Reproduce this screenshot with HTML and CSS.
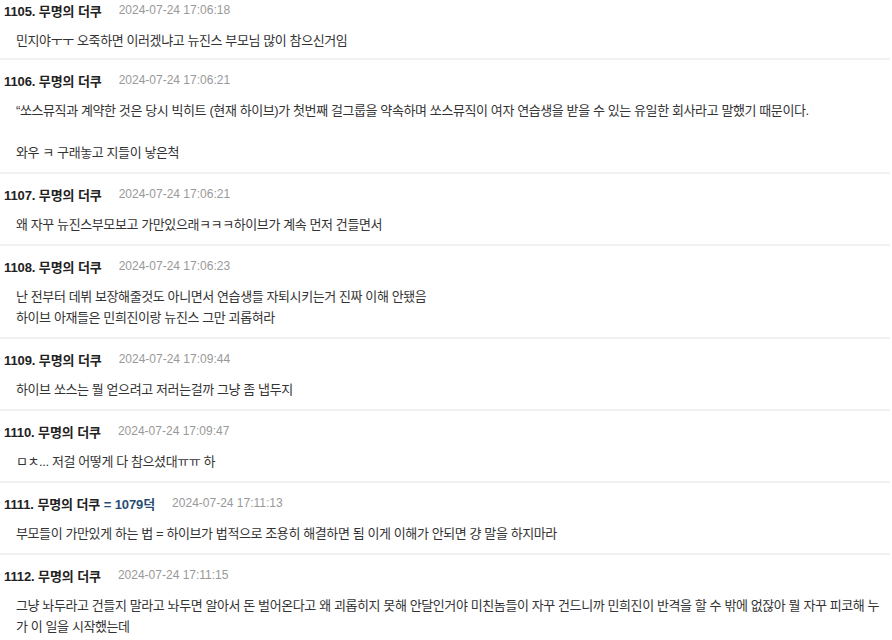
FILE: index.html
```html
<!DOCTYPE HTML>
<html>
<head>
<meta charset="utf-8">
<title>댓글</title>
<link rel="stylesheet" href="styles.css">
</head>
<body>

<!-- comment list, scrolled part way down -->
<ul class="comments">
	<li class="comment">
		<div class="head"><span class="nick">1105. 무명의 더쿠</span><span class="date">2024-07-24 17:06:18</span></div>
		<div class="body">민지야ㅜㅜ 오죽하면 이러겠냐고 뉴진스 부모님 많이 참으신거임</div>
	</li>
	<li class="comment">
		<div class="head"><span class="nick">1106. 무명의 더쿠</span><span class="date">2024-07-24 17:06:21</span></div>
		<div class="body">“쏘스뮤직과 계약한 것은 당시 빅히트 (현재 하이브)가 첫번째 걸그룹을 약속하며 쏘스뮤직이 여자 연습생을 받을 수 있는 유일한 회사라고 말했기 때문이다.<br><br>와우 ㅋ 구래놓고 지들이 낳은척</div>
	</li>
	<li class="comment">
		<div class="head"><span class="nick">1107. 무명의 더쿠</span><span class="date">2024-07-24 17:06:21</span></div>
		<div class="body">왜 자꾸 뉴진스부모보고 가만있으래ㅋㅋㅋ하이브가 계속 먼저 건들면서</div>
	</li>
	<li class="comment">
		<div class="head"><span class="nick">1108. 무명의 더쿠</span><span class="date">2024-07-24 17:06:23</span></div>
		<div class="body">난 전부터 데뷔 보장해줄것도 아니면서 연습생들 자퇴시키는거 진짜 이해 안됐음<br>하이브 아재들은 민희진이랑 뉴진스 그만 괴롭혀라</div>
	</li>
	<li class="comment">
		<div class="head"><span class="nick">1109. 무명의 더쿠</span><span class="date">2024-07-24 17:09:44</span></div>
		<div class="body">하이브 쏘스는 뭘 얻으려고 저러는걸까 그냥 좀 냅두지</div>
	</li>
	<li class="comment">
		<div class="head"><span class="nick">1110. 무명의 더쿠</span><span class="date">2024-07-24 17:09:47</span></div>
		<div class="body">ㅁㅊ... 저걸 어떻게 다 참으셨대ㅠㅠ 하</div>
	</li>
	<li class="comment">
		<div class="head"><span class="nick">1111. 무명의 더쿠 <span class="reply">= 1079덕</span></span><span class="date">2024-07-24 17:11:13</span></div>
		<div class="body">부모들이 가만있게 하는 법 = 하이브가 법적으로 조용히 해결하면 됨 이게 이해가 안되면 걍 말을 하지마라</div>
	</li>
	<li class="comment">
		<div class="head"><span class="nick">1112. 무명의 더쿠</span><span class="date">2024-07-24 17:11:15</span></div>
		<div class="body">그냥 놔두라고 건들지 말라고 놔두면 알아서 돈 벌어온다고 왜 괴롭히지 못해 안달인거야 미친놈들이 자꾸 건드니까 민희진이 반격을 할 수 밖에 없잖아 뭘 자꾸 피코해 누<br>가 이 일을 시작했는데</div>
	</li>
</ul>

</body>
</html>
```

FILE: styles.css
```css
body {
	margin: 0;
	padding: 0;
	background-color: #fff;
	color: #333;
	font-family: "Liberation Sans", "Noto Sans CJK KR", sans-serif;
	font-size: 13px;
}
.comments {
	list-style: none;
	margin: 0 2px 0 0;
	padding: 0;
}
.comment {
	padding: 10px 0 9px 0;
	border-bottom: 2px solid #f1f1f1;
}
.comment:first-child {
	padding-top: 0;
	padding-bottom: 7px;
}
.comment .head {
	display: flex;
	align-items: center;
	gap: 17px;
	height: 20px;
	padding-left: 4px;
}
.comment .nick {
	font-size: 13px;
	font-weight: bold;
	color: #222;
	letter-spacing: -0.1px;
}
.comment .reply {
	color: #2b4d75;
}
.comment .date {
	font-size: 12px;
	color: #999;
}
.comment .body {
	margin-top: 10px;
	padding-left: 16px;
	line-height: 21px;
	letter-spacing: -0.4px;
	white-space: nowrap;
}
```
